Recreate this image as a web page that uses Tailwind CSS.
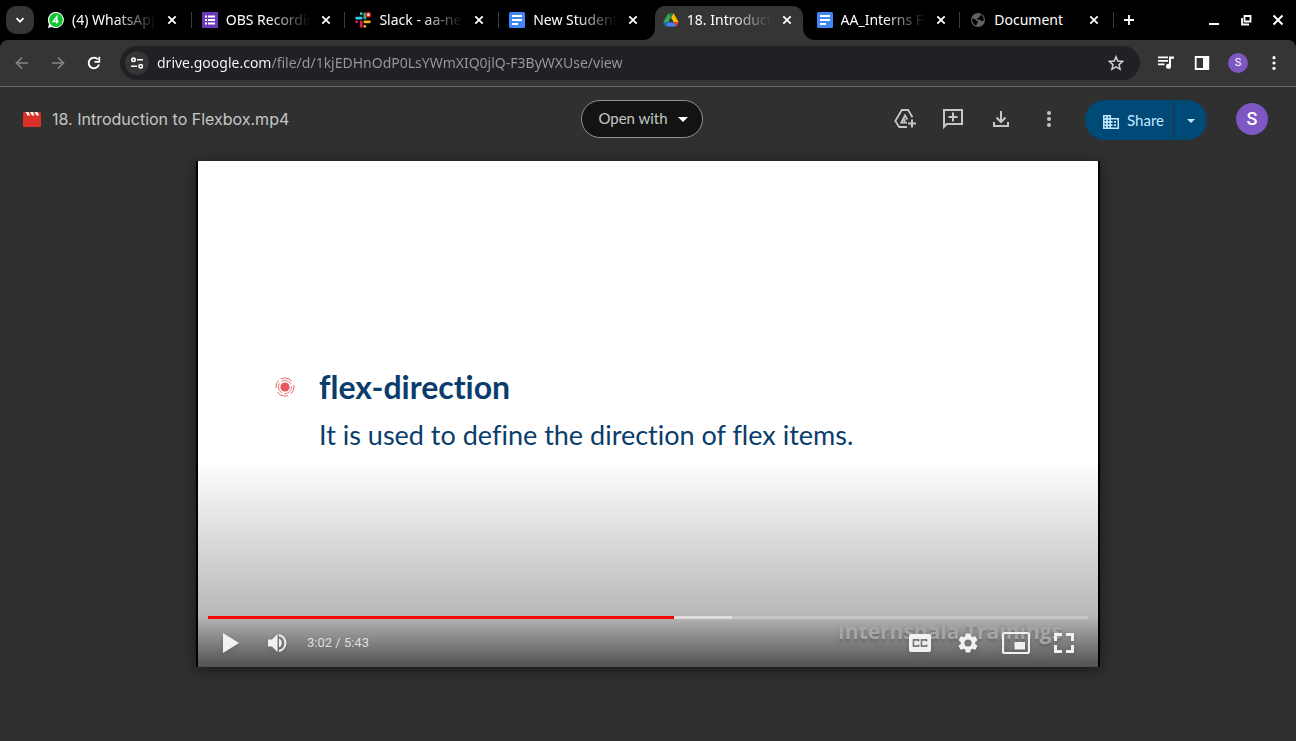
<!DOCTYPE html>
<html lang="en">
<head>
<meta charset="utf-8">
<meta name="viewport" content="width=device-width, initial-scale=1">
<title>18. Introduction to Flexbox.mp4</title>
<script src="https://cdn.jsdelivr.net/npm/@tailwindcss/browser@4"></script>
</head>
<body class="flex min-h-screen flex-col bg-[#303030] font-['Noto_Sans',sans-serif] text-sm text-white">

<svg class="hidden" aria-hidden="true">
  <symbol id="close" viewBox="0 0 10 10"><path d="M1.3 1.3l7.4 7.4M8.7 1.3L1.3 8.7" stroke="currentColor" stroke-width="1.8" fill="none"/></symbol>
  <symbol id="doc" viewBox="0 0 16 16"><rect width="16" height="16" rx="1.5" fill="#4285f4"/><path d="M3 4h10M3 8h10M3 12h6" stroke="#fff" stroke-width="1.8"/></symbol>
</svg>

<nav aria-label="Tabs" class="flex h-10 items-stretch bg-black">
  <button aria-label="Search tabs" class="mt-1.5 ml-1.5 flex size-7 shrink-0 items-center justify-center rounded-[10px] bg-[#353535]">
    <svg class="size-3" viewBox="0 0 12 12"><path d="M2.500 4.200L6 7.700l3.500-3.500" fill="none" stroke="#fff" stroke-width="1.8"/></svg>
  </button>
  <div class="ml-1 grid max-w-[1076px] flex-1 grid-cols-7">
    <div class="flex min-w-0 items-center">
      <svg class="ml-2.5 size-4 shrink-0" viewBox="0 0 16 16"><path d="M8 0a8 8 0 1 1-4 15L0 16l1-4A8 8 0 0 1 8 0z" fill="#fff"/><circle cx="8" cy="8" r="6.900" fill="#0ac630"/><path d="M8.800 11.500V4.800L5.200 9.500h5.400" stroke="#fff" stroke-width="1.500" fill="none"/></svg>
      <a href="#" class="ml-2 w-[84px] overflow-hidden whitespace-nowrap mask-r-from-50%">(4) WhatsApp</a>
      <button aria-label="Close tab" class="ml-2 flex size-4 items-center justify-center"><svg class="size-2.5"><use href="#close"/></svg></button>
      <span class="ml-auto h-4 w-px bg-[#3c3c3c]"></span>
    </div>
    <div class="flex min-w-0 items-center">
      <svg class="ml-2.5 size-4 shrink-0" viewBox="0 0 16 16"><rect width="16" height="16" rx="1" fill="#673ab7"/><path d="M3 4.500h2M3 8h2M3 11.500h2M6 4.500h7M6 8h7M6 11.500h7" stroke="#fff" stroke-width="1.800"/></svg>
      <a href="#" class="ml-2 w-[84px] overflow-hidden whitespace-nowrap mask-r-from-50%">OBS Recordings</a>
      <button aria-label="Close tab" class="ml-2 flex size-4 items-center justify-center"><svg class="size-2.5"><use href="#close"/></svg></button>
      <span class="ml-auto h-4 w-px bg-[#3c3c3c]"></span>
    </div>
    <div class="flex min-w-0 items-center">
      <svg class="ml-2.5 size-4 shrink-0" viewBox="0 0 16 16" fill="none" stroke-width="2.800" stroke-linecap="round"><path d="M6.200 6.200H1.600M6.200 1.600v.1" stroke="#36c5f0"/><path d="M9.800 1.800v4.400" stroke="#2eb67d"/><path d="M9.800 9.800h4.600M9.800 14.300v.1" stroke="#ecb22e"/><path d="M6.200 9.800v4.600M1.600 9.800h.1" stroke="#e01e5a"/><circle cx="13.300" cy="2.700" r="2" fill="#fff" stroke="#e01e2a" stroke-width="1.600"/></svg>
      <a href="#" class="ml-2 w-[84px] overflow-hidden whitespace-nowrap mask-r-from-50%">Slack - aa-new</a>
      <button aria-label="Close tab" class="ml-2 flex size-4 items-center justify-center"><svg class="size-2.5"><use href="#close"/></svg></button>
      <span class="ml-auto h-4 w-px bg-[#3c3c3c]"></span>
    </div>
    <div class="flex min-w-0 items-center">
      <svg class="ml-2.5 size-4 shrink-0"><use href="#doc"/></svg>
      <a href="#" class="ml-2 w-[84px] overflow-hidden whitespace-nowrap mask-r-from-50%">New Student</a>
      <button aria-label="Close tab" class="ml-2 flex size-4 items-center justify-center"><svg class="size-2.5"><use href="#close"/></svg></button>
    </div>
    <div class="relative flex min-w-0 items-center">
      <svg class="absolute bottom-0 -left-2.5 h-3 w-3 text-[#353535]" viewBox="0 0 12 12"><path d="M12 0v12H0A12 12 0 0 0 12 0z" fill="currentColor"/></svg>
      <svg class="absolute -right-2 bottom-0 h-3 w-3 text-[#353535]" viewBox="0 0 12 12"><path d="M0 0v12h12A12 12 0 0 1 0 0z" fill="currentColor"/></svg>
      <div class="absolute inset-x-0.5 top-1.5 bottom-0 mr-0.5 rounded-t-[10px] bg-[#353535]"></div>
      <svg class="relative ml-2.5 size-4 shrink-0" viewBox="0 0 16 16"><path d="M5.400 1.300h5.200L8 5.800z" fill="#188038"/><path d="M5.400 1.300L.3 10.200l2.500 4.400L8 5.800z" fill="#34a853"/><path d="M10.600 1.300l5.100 8.900h-5.100L8 5.800z" fill="#fbbc04"/><path d="M5.400 10.200h5.200l2.600 4.400H2.800z" fill="#4285f4"/><path d="M.3 10.200h5.100l-2.600 4.400z" fill="#1967d2"/><path d="M10.600 10.200h5.100l-2.500 4.400z" fill="#ea4335"/><path d="M8 5.800l2.600 4.400H5.400z" fill="#353535"/></svg>
      <a href="#" aria-current="page" class="relative ml-2 w-[84px] overflow-hidden whitespace-nowrap mask-r-from-50%">18. Introduction</a>
      <button aria-label="Close tab" class="relative ml-2 flex size-4 items-center justify-center"><svg class="size-2.5"><use href="#close"/></svg></button>
    </div>
    <div class="flex min-w-0 items-center">
      <svg class="ml-2.5 size-4 shrink-0"><use href="#doc"/></svg>
      <a href="#" class="ml-2 w-[84px] overflow-hidden whitespace-nowrap mask-r-from-50%">AA_Interns Fe</a>
      <button aria-label="Close tab" class="ml-2 flex size-4 items-center justify-center"><svg class="size-2.5"><use href="#close"/></svg></button>
      <span class="ml-auto h-4 w-px bg-[#3c3c3c]"></span>
    </div>
    <div class="flex min-w-0 items-center">
      <svg class="ml-2.5 size-4 shrink-0" viewBox="0 0 16 16"><circle cx="8" cy="8" r="7" fill="#5f6368"/><path d="M2 7c1.500-.5 3 0 3.500 1s2.300.3 2.300 1.800-1.300 1.500-1.500 3.700C4 13 2 10 2 7zM8.500 2.300H11c.3 1.500-1.600 1.500-1.600 2.700S7 5.600 7.200 7s3 .2 3.600 1.300 2.300.7 2.900.2A6 6 0 0 0 10 2.300z" fill="#000"/></svg>
      <a href="#" class="ml-2 w-[84px] overflow-hidden whitespace-nowrap">Document</a>
      <button aria-label="Close tab" class="ml-2 flex size-4 items-center justify-center"><svg class="size-2.5"><use href="#close"/></svg></button>
      <span class="ml-auto h-4 w-px bg-[#3c3c3c]"></span>
    </div>
  </div>
  <button aria-label="New tab" class="ml-[7px] flex w-4 items-center justify-center"><svg class="size-3" viewBox="0 0 12 12"><path d="M6 1v10M1 6h10" stroke="#fff" stroke-width="1.800"/></svg></button>
  <div class="mr-3 ml-auto flex items-center gap-5">
    <button aria-label="Minimize" class="size-3"><svg viewBox="0 0 12 12"><path d="M1 10h10" stroke="#fff" stroke-width="2"/></svg></button>
    <button aria-label="Restore" class="size-3"><svg viewBox="0 0 12 12"><path d="M4.500 2h6v5.500h-6zM2 4v6.500h7" fill="none" stroke="#fff" stroke-width="1.800"/></svg></button>
    <button aria-label="Close" class="size-3"><svg viewBox="0 0 12 12"><path d="M1.500 1.500l9 9M10.500 1.500l-9 9" stroke="#fff" stroke-width="2"/></svg></button>
  </div>
</nav>

<div class="bg-black">
<div class="flex h-[47px] items-center rounded-t-lg border-b border-[#6a6a6a] bg-[#353535]">
  <div class="ml-3.5 flex gap-5 text-[#858585]">
    <button aria-label="Back" class="size-4"><svg viewBox="0 0 16 16" fill="none" stroke="currentColor" stroke-width="1.700"><path d="M14 8H3M8 2.500L2.500 8 8 13.500"/></svg></button>
    <button aria-label="Forward" class="size-4"><svg viewBox="0 0 16 16" fill="none" stroke="currentColor" stroke-width="1.700"><path d="M2 8h11M8 2.500L13.500 8 8 13.500"/></svg></button>
    <button aria-label="Reload" class="size-4 text-white"><svg viewBox="0 0 16 16" fill="none" stroke="currentColor" stroke-width="1.900"><path d="M13 9.500A5.300 5.300 0 1 1 12 4.500"/><path d="M13.300 1.800v5H8.500" stroke-width="1.700"/></svg></button>
  </div>
  <div class="ml-[18px] flex h-[34px] flex-1 items-center rounded-full bg-[#202124] pr-4 pl-[5px]">
    <button aria-label="View site information" class="flex size-6 items-center justify-center rounded-full bg-[#353535]"><svg class="size-4" viewBox="0 0 16 16" fill="none" stroke="#fff" stroke-width="1.600"><circle cx="4.500" cy="4.800" r="1.700"/><path d="M8 4.800h6M2 11.200h6"/><circle cx="11.700" cy="11.200" r="1.700"/></svg></button>
    <input aria-label="Address" value="drive.google.com/file/d/1kjEDHnOdP0LsYWmXIQ0jlQ-F3ByWXUse/view" class="ml-2 min-w-0 flex-1 bg-linear-to-r from-white from-[114px] to-[#9a9a9a] to-[114px] bg-clip-text text-transparent outline-none">
    <button aria-label="Bookmark" class="size-4"><svg viewBox="0 0 16 16" fill="none" stroke="#d0d0d0" stroke-width="1.500"><path d="M8 1.700l1.800 4.400 4.800.4-3.600 3.100 1.100 4.700L8 11.800l-4.100 2.500L5 9.600 1.400 6.500l4.800-.4z"/></svg></button>
  </div>
  <div class="mr-3.5 ml-[18px] flex items-center gap-5">
    <button aria-label="Media controls" class="size-4"><svg viewBox="0 0 16 16" fill="#fff"><path d="M0 1.500h10v1.700H0zM0 5h10v1.700H0zM0 8.500h6.500v1.700H0zM11 1.500h5v2.200h-3v7.500a2.500 2.500 0 1 1-2-2.400z"/></svg></button>
    <button aria-label="Side panel" class="size-4"><svg viewBox="0 0 16 16"><path d="M1.700 2h12.600v12H1.700z" fill="none" stroke="#fff" stroke-width="1.800"/><path d="M9 1.500h5.500v13H9z" fill="#fff"/></svg></button>
    <button aria-label="Profile" class="-mx-0.5 flex size-5 items-center justify-center rounded-full bg-[#7e57c2] font-[Roboto] text-[11px]">S</button>
    <button aria-label="Browser menu" class="size-4"><svg viewBox="0 0 16 16" fill="#fff"><circle cx="8" cy="2.700" r="1.600"/><circle cx="8" cy="8" r="1.600"/><circle cx="8" cy="13.300" r="1.600"/></svg></button>
  </div>
</div>
</div>

<header class="grid h-16 grid-cols-[1fr_auto_1fr] items-center font-[Lato,sans-serif]">
  <div class="flex items-center pl-[23px]">
    <svg class="h-4 w-[18px]" viewBox="0 0 18 16"><rect y="1" width="18" height="15" rx="1.500" fill="#d93025"/><path d="M2.500 1h3l1.500 3.500H4.500zM7 1h3l1.500 3.500H9zM11.500 1h3L16 4.500h-2.500z" fill="#fff"/></svg>
    <h1 class="ml-[11px] font-[Inter] text-base text-[#c4c7c5]">18. Introduction to Flexbox.mp4</h1>
  </div>
  <button class="mr-3 flex h-[38px] items-center gap-2.5 rounded-full border border-[#8e918f] bg-[#131314] pr-[14px] pl-4 text-[15px] text-[#c4c7c5]">Open with <svg class="w-2.5" viewBox="0 0 10 5"><path d="M0 0h10L5 5z" fill="#fff"/></svg></button>
  <div class="flex items-center justify-end pr-7 text-[#c4c7c5]">
    <button aria-label="Add shortcut to Drive" class="size-6"><svg viewBox="0 0 24 24" fill="none" stroke="currentColor" stroke-width="1.800"><path d="M14 20H6.200L2.300 14 8.800 3h6.400l4.200 7.200"/><path d="M14 15.700H8.300L12 8.500l2.300 4M11 14.500l1.300-2.300"/><path d="M19 12.500v8M15 16.500h8" stroke-width="2"/></svg></button>
    <button aria-label="Add a comment" class="ml-6 size-6"><svg viewBox="0 0 24 24" fill="none" stroke="currentColor" stroke-width="2"><path d="M3 19.800V3h18v14H5.800zM12 5.500v9M7.500 10h9"/></svg></button>
    <button aria-label="Download" class="ml-6 size-6"><svg viewBox="0 0 24 24" fill="none" stroke="currentColor" stroke-width="2"><path d="M12 4v11M7.500 10.500L12 15l4.500-4.500M5 15v4h14v-4"/></svg></button>
    <button aria-label="More actions" class="ml-6 size-6"><svg viewBox="0 0 24 24" fill="currentColor"><circle cx="12" cy="6" r="2"/><circle cx="12" cy="12" r="2"/><circle cx="12" cy="18" r="2"/></svg></button>
    <div class="mt-0.5 ml-6 flex h-10 overflow-hidden rounded-full bg-[#004a77] text-[15px] text-[#c2e7ff]">
      <button class="flex items-center gap-2 border-r border-[#303030] pr-[9px] pl-[18px]"><svg class="mt-1 size-4" viewBox="0 0 16 16" fill="currentColor"><path fill-rule="evenodd" d="M0 1h8v3h8v11H0zM1.500 2.500v1.600h1.600V2.500zm3.300 0v1.600h1.700V2.500zM1.500 5.700v1.600h1.600V5.700zm3.300 0v1.600h1.700V5.700zM1.500 8.900v1.500h1.600V8.900zm3.300 0v1.500h1.700V8.900zM1.500 12v1.500h1.600V12zm3.300 0v1.500h1.700V12zM8 5.500v1.600h1.600v1.600H8v1.600h1.600v1.600H8v1.600h6.500v-8z"/><path d="M11 7h2v1.700h-2zM11 10.300h2V12h-2z"/></svg><span class="mt-0.5">Share</span></button>
      <button aria-label="Share options" class="flex w-[33px] items-center justify-center"><svg class="mt-0.5 w-2" viewBox="0 0 8 4"><path d="M0 0h8L4 4z" fill="currentColor"/></svg></button>
    </div>
    <button aria-label="Account" class="ml-[29px] flex size-8 items-center justify-center rounded-full bg-[#7e57c2] font-[Roboto] text-lg font-medium text-white">S</button>
  </div>
</header>

<main class="flex flex-1 justify-center px-4 pt-2.5 pb-[74px]">
  <section aria-label="Video player" class="flex w-full max-w-[904px] flex-col border-x-2 border-black bg-white shadow-[0_3px_14px_rgba(0,0,0,0.5)]">
    <div class="flex items-start pt-[206px] pl-[77px] text-[#0a3d6b]">
      <svg class="mt-2.5 size-5 shrink-0" viewBox="0 0 20 20" fill="none" stroke="#e4595c"><circle cx="10" cy="10" r="4.600" fill="#e8575c" stroke="none"/><circle cx="10" cy="10" r="6.600" stroke-width=".8" stroke-dasharray="11 2.500"/><circle cx="10" cy="10" r="9" stroke-width=".9" stroke-dasharray="8 3 12 4"/></svg>
      <div class="ml-6 font-[Lato,sans-serif] [font-variant-ligatures:none]">
        <h2 class="text-[32px] leading-10 font-bold">flex-direction</h2>
        <p class="mt-3 text-[27px] leading-8">It is used to define the direction of flex items.</p>
      </div>
    </div>
    <div class="mt-auto flex h-[206px] flex-col justify-end bg-linear-to-b from-white from-0% via-[#b8b8b8] via-75% to-[#525252] px-2.5">
      <div role="progressbar" aria-label="Playback" aria-valuenow="53" class="flex h-[3px] bg-[#c6c6c6]">
        <span class="bg-[#f00]" style="width:53%"></span><span class="bg-[#dedede]" style="width:6.500%"></span>
      </div>
      <div class="relative flex h-12 items-center text-[#f1f1f1]">
        <span class="absolute top-0 right-[26px] font-['Open_Sans'] text-[21px] leading-6 font-bold text-[#a6a6a6] text-shadow-lg">Internshala Trainings</span>
        <button aria-label="Play" class="ml-[15px] h-5 w-4 drop-shadow-sm"><svg viewBox="0 0 16 20"><path d="M0 0l16 10L0 20z" fill="currentColor"/></svg></button>
        <button aria-label="Mute" class="ml-[29px] size-5 drop-shadow-sm"><svg viewBox="0 0 20 20" fill="currentColor"><path d="M0 6.500h4L9.500 1v18L4 13.500H0zM11 5.500a5 5 0 0 1 0 9z"/><path d="M11 2a8.200 8.200 0 0 1 0 16" fill="none" stroke="currentColor" stroke-width="2"/></svg></button>
        <span class="ml-[19px] font-[Roboto] text-[13px] text-[#dddddd]">3:02 / 5:43</span>
        <div class="relative ml-auto flex items-center gap-5 pr-2.5 drop-shadow-sm">
          <button aria-label="Subtitles" class="flex h-7 w-7 items-center justify-center"><svg class="h-[18px] w-[22px]" viewBox="0 0 22 18"><rect width="22" height="18" rx="2" fill="currentColor"/><path d="M9.500 7.500V5.800h-5v6.400h5v-1.700M17.500 7.500V5.800h-5v6.400h5v-1.700" fill="none" stroke="#777" stroke-width="1.700"/></svg></button>
          <button aria-label="Settings" class="flex size-7 items-center justify-center"><svg class="size-6" viewBox="0 0 24 24" fill="currentColor"><path d="M19.140 12.940c.040-.300.060-.610.060-.940s-.020-.640-.070-.940l2.030-1.580a.49.49 0 0 0 .12-.61l-1.920-3.320a.49.49 0 0 0-.59-.22l-2.390.96a7 7 0 0 0-1.620-.94l-.36-2.540A.48.48 0 0 0 13.920 2.400h-3.840a.48.48 0 0 0-.47.410l-.36 2.540a7 7 0 0 0-1.620.94l-2.390-.96a.49.49 0 0 0-.59.22L2.740 8.870a.48.48 0 0 0 .12.610l2.030 1.580a6 6 0 0 0 0 1.880l-2.030 1.580a.49.49 0 0 0-.12.610l1.920 3.320c.120.220.370.290.590.220l2.390-.96c.5.380 1.030.7 1.620.94l.36 2.540c.05.240.24.410.48.410h3.840c.24 0 .44-.17.470-.41l.36-2.540a7 7 0 0 0 1.620-.94l2.390.96c.22.080.47 0 .59-.22l1.920-3.320a.48.48 0 0 0-.12-.61zM12 15.600a3.600 3.600 0 1 1 0-7.200 3.600 3.600 0 0 1 0 7.200z"/></svg></button>
          <button aria-label="Miniplayer" class="size-7"><svg viewBox="0 0 28 28"><rect x="1" y="4" width="26" height="20" rx="1.500" fill="none" stroke="currentColor" stroke-width="2.200"/><path d="M12.500 13h10.500v7.500H12.500z" fill="currentColor"/></svg></button>
          <button aria-label="Full screen" class="size-7"><svg viewBox="0 0 28 28" fill="none" stroke="currentColor" stroke-width="3"><path d="M5.500 12V5.500H12M16 5.500h6.500V12M22.500 16v6.500H16M12 22.500H5.500V16"/></svg></button>
        </div>
      </div>
    </div>
  </section>
</main>
</body>
</html>
